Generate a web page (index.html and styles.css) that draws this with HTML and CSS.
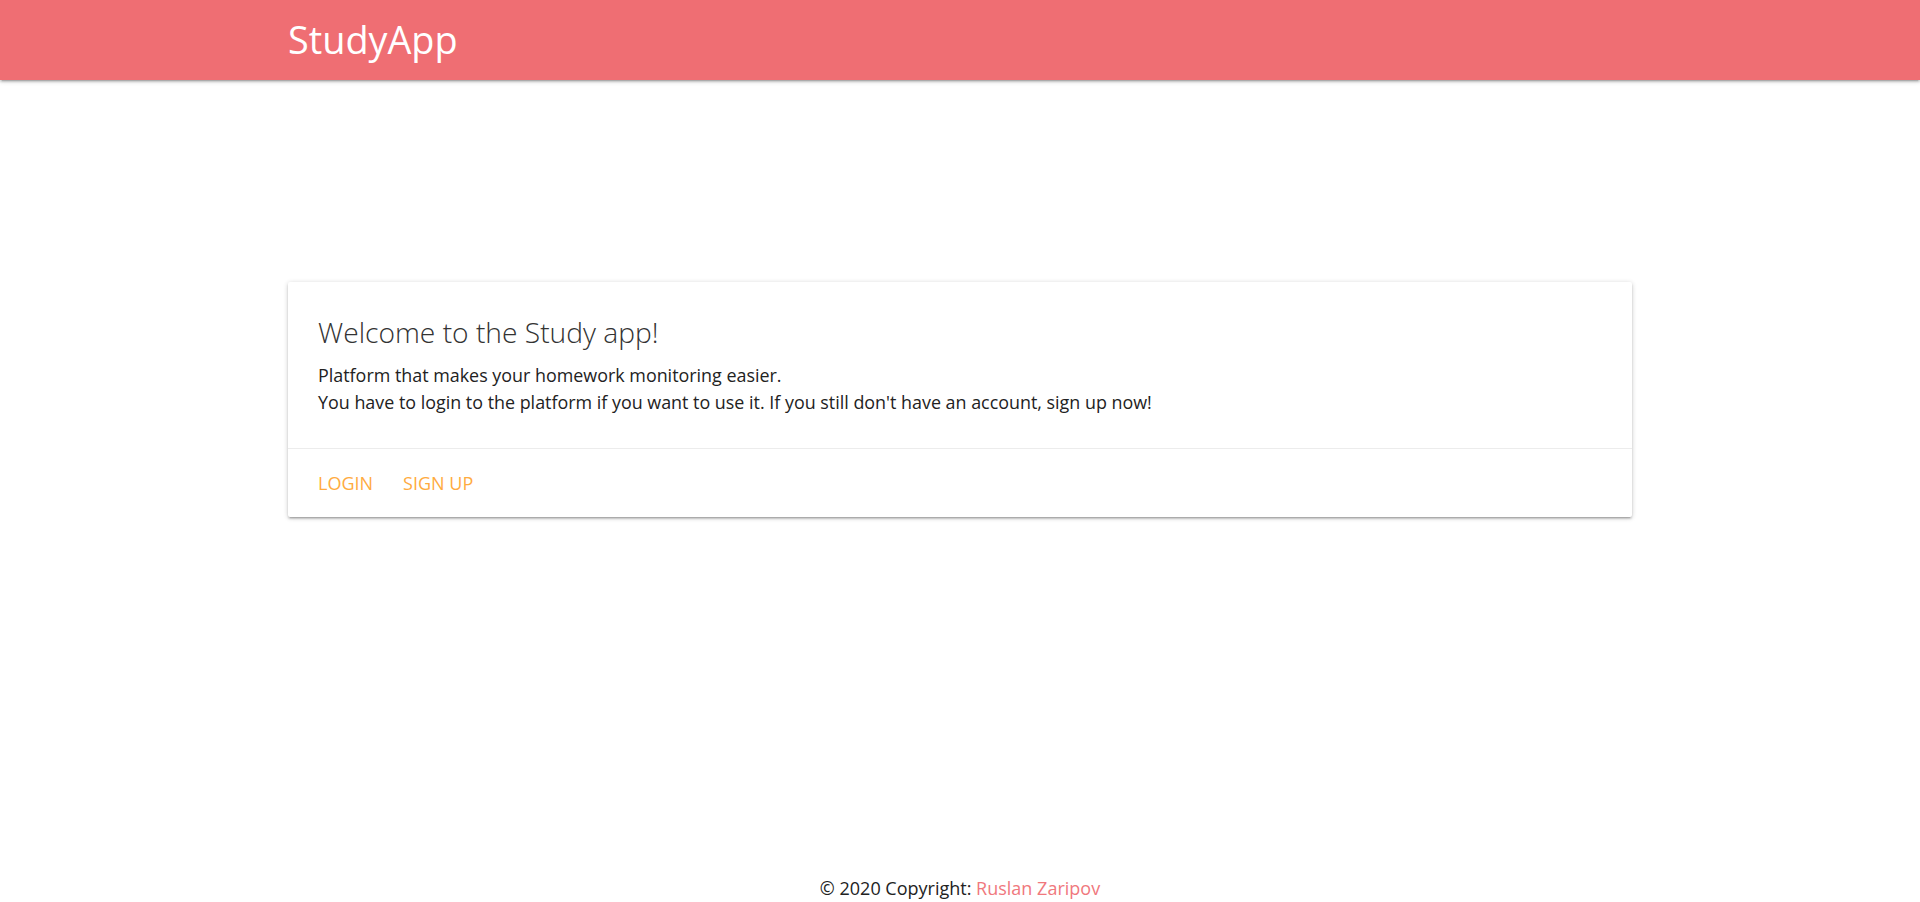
FILE: index.html
```html
<!DOCTYPE html>
<html lang="en">
<head>
<meta charset="utf-8">
<title>StudyApp</title>
<link rel="stylesheet" href="styles.css">
</head>
<body>
<header class="navbar">
  <div class="container nav-inner">
    <a class="brand" href="#">StudyApp</a>
  </div>
</header>
<main class="main">
  <div class="container">
    <section class="card">
      <div class="card-content">
        <h1 class="card-title">Welcome to the Study app!</h1>
        <p class="card-text">Platform that makes your homework monitoring easier.</p>
        <p class="card-text">You have to login to the platform if you want to use it. If you still don't have an account, sign up now!</p>
      </div>
      <div class="card-action">
        <a class="action-link" href="#">Login</a>
        <a class="action-link" href="#">Sign up</a>
      </div>
    </section>
  </div>
</main>
<footer class="footer">
  <span class="copy">© 2020 Copyright: <a class="author" href="#">Ruslan Zaripov</a></span>
</footer>
</body>
</html>
```
FILE: styles.css
```css
* { box-sizing: border-box; }
html, body { margin: 0; padding: 0; }
body {
  font-family: "Open Sans", "Noto Sans", sans-serif;
  color: rgba(0, 0, 0, 0.87);
  background: #fff;
  min-height: 100vh;
  display: flex;
  flex-direction: column;
}
a { text-decoration: none; }
.container {
  width: 70%;
  margin: 0 auto;
}
.navbar {
  height: 80px;
  background: #ef6e73;
  box-shadow: 0 2px 2px 0 rgba(0,0,0,.14), 0 3px 1px -2px rgba(0,0,0,.12), 0 1px 5px 0 rgba(0,0,0,.2);
  position: relative;
  z-index: 2;
}
.nav-inner {
  height: 80px;
  display: flex;
  align-items: center;
}
.brand {
  color: #fff;
  font-size: 37.8px;
  font-weight: 400;
  line-height: 80px;
}
.main {
  flex: 1;
  padding-top: 202px;
}
.card {
  background: #fff;
  border-radius: 2px;
  box-shadow: 0 2px 2px 0 rgba(0,0,0,.14), 0 3px 1px -2px rgba(0,0,0,.12), 0 1px 5px 0 rgba(0,0,0,.2);
}
.card-content {
  padding: 30px 30px 32px;
}
.card-title {
  margin: 0 0 10px;
  font-size: 28.2px;
  font-weight: 300;
  line-height: 40px;
  color: #333;
}
.card-text {
  margin: 0;
  font-size: 17.9px;
  line-height: 27px;
  color: #222;
}
.card-action {
  border-top: 1px solid rgba(160,160,160,0.2);
  padding: 16px 30px;
  display: flex;
  gap: 30px;
}
.action-link {
  color: #ffab40;
  text-transform: uppercase;
  font-size: 18px;
  line-height: 36px;
}
.footer {
  display: flex;
  justify-content: center;
}
.copy {
  font-size: 18px;
  line-height: 27px;
  color: #222;
}
.author { color: #f0787d; }
```
